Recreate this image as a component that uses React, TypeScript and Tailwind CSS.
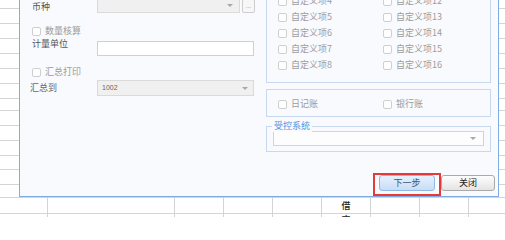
import React from "react";

const rowHeights = [9, 15, 15, 15, 15, 15, 15, 12, 15, 15, 15, 14, 15];
const colWidths = [48, 127, 49, 49, 49, 49, 49, 49];

function Strip({ className }: { className: string }) {
  return (
    <div className={"flex flex-col " + className}>
      {rowHeights.map((h, i) => (
        <div key={i} className="border-b border-[#d4d4d4] shrink-0" style={{ height: h }} />
      ))}
    </div>
  );
}

function Arrow() {
  return (
    <span className="w-0 h-0 border-l-[3px] border-r-[3px] border-t-[3px] border-l-transparent border-r-transparent border-t-[#a8a8a8]" />
  );
}

function Cb({ label }: { label: string }) {
  return (
    <div className="flex items-center gap-[4px] h-[16px]">
      <span className="w-[9px] h-[9px] border border-[#cfcfcf] rounded-[2px] bg-white shrink-0" />
      <span className="text-[9px] leading-[12px] text-[#9c9c9c] whitespace-nowrap">{label}</span>
    </div>
  );
}

export default function App() {
  return (
    <div className="relative w-[505px] h-[217px] overflow-hidden bg-white font-['Noto_Sans_CJK_SC','Microsoft_YaHei',sans-serif]">
      {/* spreadsheet behind */}
      <div className="flex flex-col w-full h-full">
        <div className="flex h-[197px] shrink-0">
          <Strip className="w-[19px]" />
          <div className="flex-1" />
          <Strip className="w-[7px]" />
        </div>
        <div className="flex h-[17px] shrink-0 border-t border-b border-[#d4d4d4]">
          {colWidths.map((w, i) => (
            <div key={i} className="border-r border-[#d4d4d4] shrink-0 flex items-center justify-center" style={{ width: w }}>
              {i === 5 ? <span className="text-[9px] leading-[10px] font-medium text-[#222]">借</span> : null}
            </div>
          ))}
          <div className="flex-1" />
        </div>
        <div className="flex flex-1">
          {colWidths.map((w, i) => (
            <div key={i} className="border-r border-[#d4d4d4] shrink-0 flex justify-center" style={{ width: w }}>
              {i === 5 ? <span className="text-[9px] leading-[10px] pt-[1px] font-medium text-[#222]">方</span> : null}
            </div>
          ))}
          <div className="flex-1" />
        </div>
      </div>

      {/* dialog */}
      <div className="absolute left-[19px] top-[-20px] w-[480px] h-[217px] border border-[#80abe3] bg-[#f8fafe] flex flex-col">
        <div className="flex">
          {/* left column */}
          <div className="w-[246px] pl-[12px] flex flex-col">
            <div className="mt-[16px] flex items-end h-[16px]">
              <span className="w-[65px] self-center pt-[3px] text-[9px] leading-[12px] text-[#555]">币种</span>
              <div className="w-[143px] h-[16px] border border-[#dadada] bg-[#f0f0f0] flex items-center justify-end pr-[6px]">
                <Arrow />
              </div>
              <div className="ml-[2px] w-[13px] h-[14px] border border-[#cdcdcd] rounded-[2px] bg-[#f7f7f7] flex items-center justify-center text-[6px] leading-[6px] text-[#999]">
                ...
              </div>
            </div>
            <div className="mt-[11px] h-[14px] flex items-center">
              <Cb label="数量核算" />
            </div>
            <div className="mt-[3px] h-[15px] flex items-start">
              <span className="w-[65px] -mt-[4px] text-[9px] leading-[14px] text-[#555]">计量单位</span>
              <div className="w-[157px] h-[15px] border border-[#d0d0d0] bg-white" />
            </div>
            <div className="mt-[9px] h-[14px] flex items-center">
              <Cb label="汇总打印" />
            </div>
            <div className="mt-[1px] h-[16px] flex items-center">
              <span className="w-[65px] -ml-[2px] mr-[2px] text-[9px] leading-[12px] text-[#666]">汇总到</span>
              <div className="w-[157px] h-[16px] border border-[#dadada] bg-[#f0f0f0] flex items-center justify-between pl-[4px] pr-[5px]">
                <span className="text-[7px] leading-[8px] text-[#666] font-['Liberation_Sans',sans-serif]">1002</span>
                <Arrow />
              </div>
            </div>
          </div>

          {/* right column */}
          <div className="w-[225px] flex flex-col">
            <div className="mt-[2px] border border-[#c8d8ee] pt-[9px] pb-[9px] pl-[11px] grid grid-cols-[105px_1fr]">
              {[4, 5, 6, 7, 8].map((n) => (
                <React.Fragment key={n}>
                  <Cb label={"自定义项" + n} />
                  <Cb label={"自定义项" + (n + 8)} />
                </React.Fragment>
              ))}
            </div>
            <div className="mt-[6px] border border-[#c8d8ee] pt-[6px] pb-[4px] pl-[11px] grid grid-cols-[105px_1fr]">
              <Cb label="日记账" />
              <Cb label="银行账" />
            </div>
            <div className="mt-[9px] relative border border-[#c8d8ee] pt-[4px] pb-[5px] px-[6px]">
              <span className="absolute left-[5px] -top-[7px] px-[2px] bg-[#f8fafe] text-[9px] leading-[12px] text-[#5592e4]">
                受控系统
              </span>
              <div className="h-[15px] border border-[#d4d4d4] bg-[#fdfdfd] flex items-center justify-end pr-[7px]">
                <Arrow />
              </div>
            </div>
          </div>
        </div>

        {/* buttons */}
        <div className="mt-auto flex justify-end gap-[6px] pr-[3px] pb-[5px]">
          <div className="relative">
            <button className="w-[56px] h-[16px] rounded-[3px] border border-[#92b8e6] bg-gradient-to-b from-[#e6f1fd] to-[#c8ddf6] text-[9px] leading-[12px] text-[#3b5674] flex items-center justify-center">
              下一步
            </button>
            <span className="absolute -left-[6px] -right-[6px] -top-[2px] -bottom-[5px] border-2 border-[#e53a3a]" />
          </div>
          <button className="w-[54px] h-[16px] rounded-[3px] border border-[#aaaaaa] bg-gradient-to-b from-[#fdfdfd] to-[#e4e4e4] text-[9px] leading-[12px] text-[#222] flex items-center justify-center">
            关闭
          </button>
        </div>
      </div>
    </div>
  );
}
